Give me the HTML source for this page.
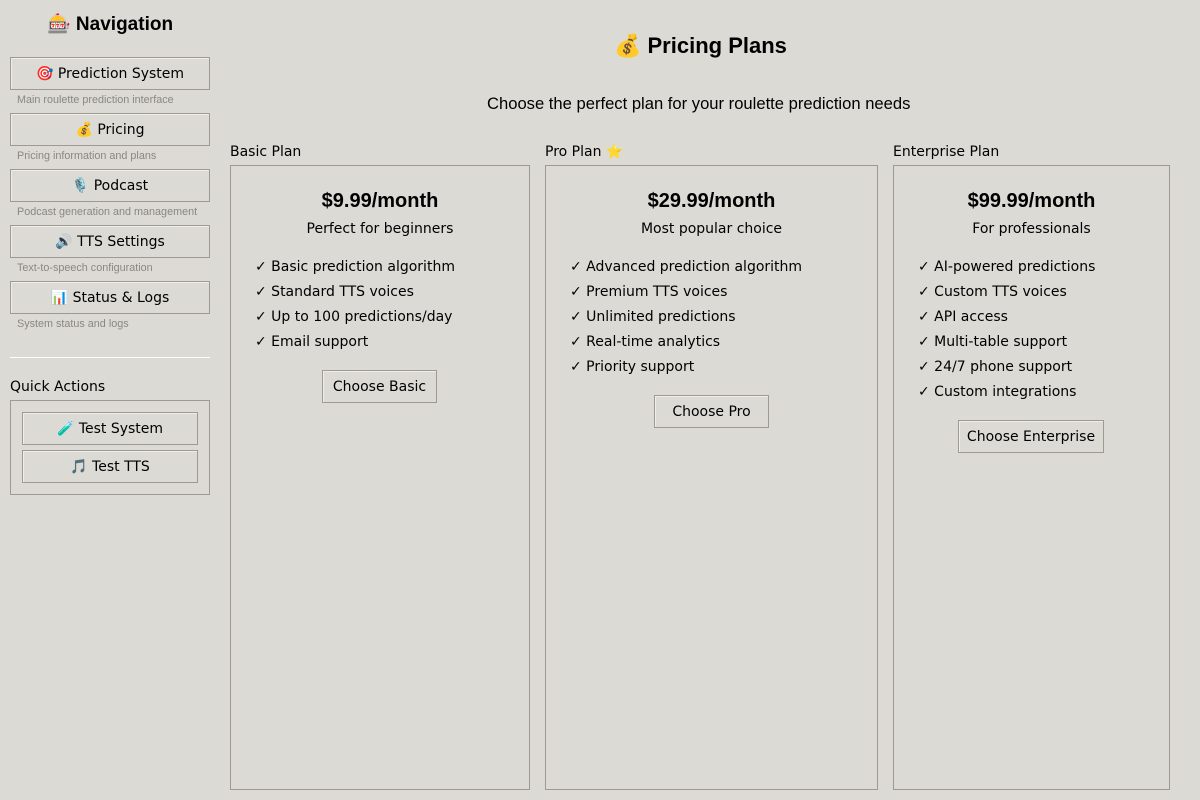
<!DOCTYPE html>
<html><head><meta charset="utf-8"><style>
*{margin:0;padding:0;box-sizing:border-box}
body{width:1200px;height:800px;background:#dcdad5;position:relative;overflow:hidden;font-family:"DejaVu Sans","Liberation Sans","Noto Sans CJK JP",sans-serif;color:#000}
.a{position:absolute;white-space:nowrap}
.btn{position:absolute;border:1px solid #9e9a91;background:#dcdad5;font-size:14px;display:flex;align-items:center;justify-content:center;box-shadow:inset 1px 1px 0 #eeede9;padding-top:1px}
.desc{position:absolute;font-family:"Liberation Sans",sans-serif;font-size:10.8px;color:#8a8782;white-space:nowrap}
.box{position:absolute;border:1px solid #9e9a91}
.lbl{position:absolute;font-size:14px;white-space:nowrap}
.price{position:absolute;left:0;right:0;text-align:center;font-family:"Liberation Sans",sans-serif;font-weight:bold;font-size:20px}
.sub{position:absolute;left:0;right:0;text-align:center;font-size:14px}
.f{position:absolute;font-size:14px;white-space:nowrap}
</style></head><body>
<div class="a" style="left:47px;top:12px;font-family:'Liberation Sans',sans-serif;font-weight:bold;font-size:19px">🎰 Navigation</div>

<div class="btn" style="left:10px;top:57px;width:200px;height:33px">🎯 Prediction System</div>
<div class="desc" style="left:17px;top:94px">Main roulette prediction interface</div>
<div class="btn" style="left:10px;top:113px;width:200px;height:33px">💰 Pricing</div>
<div class="desc" style="left:17px;top:150px">Pricing information and plans</div>
<div class="btn" style="left:10px;top:169px;width:200px;height:33px">🎙️ Podcast</div>
<div class="desc" style="left:17px;top:206px">Podcast generation and management</div>
<div class="btn" style="left:10px;top:225px;width:200px;height:33px">🔊 TTS Settings</div>
<div class="desc" style="left:17px;top:262px">Text-to-speech configuration</div>
<div class="btn" style="left:10px;top:281px;width:200px;height:33px">📊 Status &amp; Logs</div>
<div class="desc" style="left:17px;top:318px">System status and logs</div>

<div class="a" style="left:10px;top:357px;width:200px;height:1px;background:#9e9a91;border-bottom:1px solid #fff"></div>
<div class="lbl" style="left:10px;top:379px">Quick Actions</div>
<div class="box" style="left:10px;top:400px;width:200px;height:95px">
<div class="btn" style="left:11px;top:11px;width:176px;height:33px">🧪 Test System</div>
<div class="btn" style="left:11px;top:49px;width:176px;height:33px">🎵 Test TTS</div>
</div>

<div class="a" style="left:614px;top:33px;font-family:'Liberation Sans',sans-serif;font-weight:bold;font-size:22px">💰 Pricing Plans</div>
<div class="a" style="left:487px;top:94px;font-family:'Liberation Sans',sans-serif;font-size:16.6px">Choose the perfect plan for your roulette prediction needs</div>

<div class="lbl" style="left:230px;top:144px">Basic Plan</div>
<div class="box" style="left:230px;top:165px;width:300px;height:625px">
<div class="price" style="top:24px">$9.99/month</div>
<div class="sub" style="top:55px">Perfect for beginners</div>
<div class="f" style="left:24px;top:93px">✓ Basic prediction algorithm</div>
<div class="f" style="left:24px;top:118px">✓ Standard TTS voices</div>
<div class="f" style="left:24px;top:143px">✓ Up to 100 predictions/day</div>
<div class="f" style="left:24px;top:168px">✓ Email support</div>
<div class="btn" style="left:91px;top:204px;width:115px;height:33px">Choose Basic</div>
</div>

<div class="lbl" style="left:545px;top:144px">Pro Plan ⭐</div>
<div class="box" style="left:545px;top:165px;width:333px;height:625px">
<div class="price" style="top:24px">$29.99/month</div>
<div class="sub" style="top:55px">Most popular choice</div>
<div class="f" style="left:24px;top:93px">✓ Advanced prediction algorithm</div>
<div class="f" style="left:24px;top:118px">✓ Premium TTS voices</div>
<div class="f" style="left:24px;top:143px">✓ Unlimited predictions</div>
<div class="f" style="left:24px;top:168px">✓ Real-time analytics</div>
<div class="f" style="left:24px;top:193px">✓ Priority support</div>
<div class="btn" style="left:108px;top:229px;width:115px;height:33px">Choose Pro</div>
</div>

<div class="lbl" style="left:893px;top:144px">Enterprise Plan</div>
<div class="box" style="left:893px;top:165px;width:277px;height:625px">
<div class="price" style="top:24px">$99.99/month</div>
<div class="sub" style="top:55px">For professionals</div>
<div class="f" style="left:24px;top:93px">✓ AI-powered predictions</div>
<div class="f" style="left:24px;top:118px">✓ Custom TTS voices</div>
<div class="f" style="left:24px;top:143px">✓ API access</div>
<div class="f" style="left:24px;top:168px">✓ Multi-table support</div>
<div class="f" style="left:24px;top:193px">✓ 24/7 phone support</div>
<div class="f" style="left:24px;top:218px">✓ Custom integrations</div>
<div class="btn" style="left:64px;top:254px;width:146px;height:33px">Choose Enterprise</div>
</div>
</body></html>
